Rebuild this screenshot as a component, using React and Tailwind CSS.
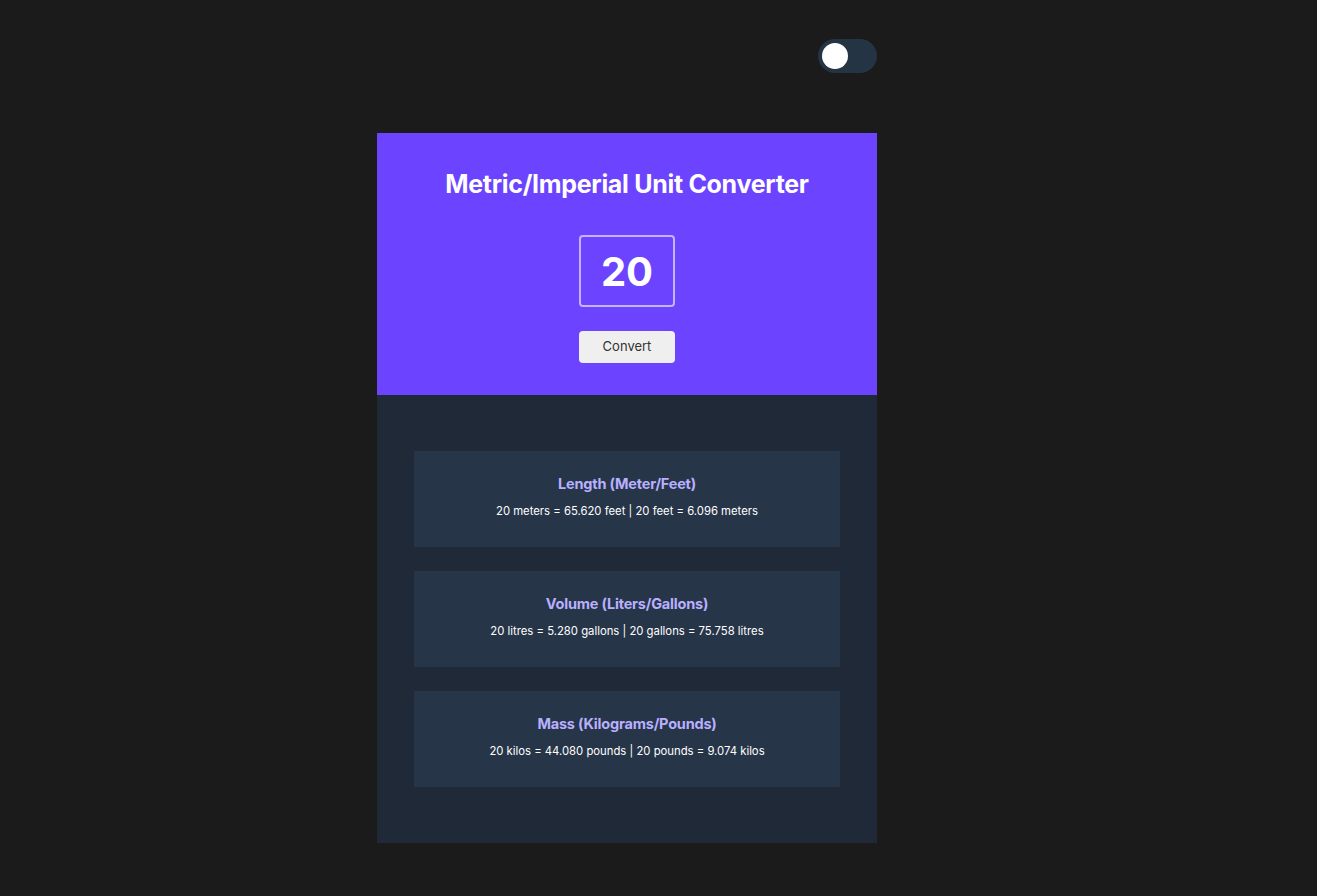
import { useState } from "react";

const conversions = (n) => [
  {
    title: "Length (Meter/Feet)",
    text: `${n} meters = ${(n * 3.281).toFixed(3)} feet | ${n} feet = ${(n / 3.281).toFixed(3)} meters`,
  },
  {
    title: "Volume (Liters/Gallons)",
    text: `${n} litres = ${(n * 0.264).toFixed(3)} gallons | ${n} gallons = ${(n / 0.264).toFixed(3)} litres`,
  },
  {
    title: "Mass (Kilograms/Pounds)",
    text: `${n} kilos = ${(n * 2.204).toFixed(3)} pounds | ${n} pounds = ${(n / 2.204).toFixed(3)} kilos`,
  },
];

const App = () => {
  const [value, setValue] = useState("20");
  const [num, setNum] = useState(20);
  const [dark, setDark] = useState(true);

  return (
    <div
      className="min-h-screen bg-[#1b1b1b] pl-[377px]"
      style={{ fontFamily: "Inter, 'Noto Sans', sans-serif" }}
    >
      <div className="w-[500px] flex flex-col">
        {/* theme toggle */}
        <div className="flex justify-end pt-[39px] pb-[60px]">
          <button
            onClick={() => setDark(!dark)}
            className="w-[59px] h-[34px] rounded-full bg-[#253444] flex items-center px-[4px]"
          >
            <span className="w-[26px] h-[26px] rounded-full bg-white block" />
          </button>
        </div>

        {/* header */}
        <div className="bg-[#6c43ff] flex flex-col items-center pt-[36px] pb-[32px]">
          <h1 className="text-white text-[25px] font-bold tracking-[-0.3px] leading-[30px]">
            Metric/Imperial Unit Converter
          </h1>
          <input
            value={value}
            onChange={(e) => setValue(e.target.value)}
            className="mt-[36px] w-[96px] h-[72px] rounded-[4px] border-2 border-white/60 bg-transparent text-white text-[40px] font-bold text-center outline-none"
          />
          <button
            onClick={() => setNum(Number(value) || 0)}
            className="mt-[24px] w-[96px] h-[32px] rounded-[4px] bg-[#efefef] text-[#333] text-[13px]"
          >
            Convert
          </button>
        </div>

        {/* results */}
        <div className="bg-[#1f2937] pt-[56px] pb-[56px] pl-[37px] pr-[37px] flex flex-col gap-[24px]">
          {conversions(num).map((c) => (
            <div key={c.title} className="bg-[#273549] h-[96px] flex flex-col items-center pt-[23px]">
              <h2 className="text-[#b8b0ff] text-[14.5px] font-bold leading-[20px] tracking-[-0.2px]">{c.title}</h2>
              <p className="text-white text-[11.3px] mt-[10px] leading-[14px]">{c.text}</p>
            </div>
          ))}
        </div>
      </div>
    </div>
  );
};

export default App;
